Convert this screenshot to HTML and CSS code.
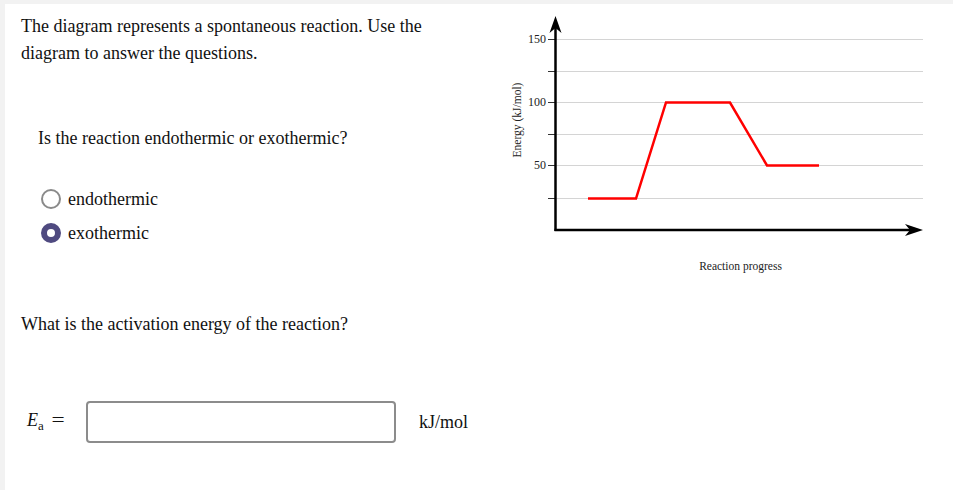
FILE: index.html
```html
<!DOCTYPE html>
<html>
<head>
<meta charset="utf-8">
<link rel="stylesheet" href="styles.css">
</head>
<body>
<div class="panel">
  <div class="left">
    <p class="intro">The diagram represents a spontaneous reaction. Use the diagram to answer the questions.</p>
    <p class="q1">Is the reaction endothermic or exothermic?</p>
    <div class="options">
      <label class="opt"><span class="radio"></span>endothermic</label>
      <label class="opt"><span class="radio checked"></span>exothermic</label>
    </div>
    <p class="q2">What is the activation energy of the reaction?</p>
    <div class="answer">
      <span class="ea"><i>E</i><sub>a</sub><span class="eq">=</span></span>
      <span class="input"></span>
      <span class="unit">kJ/mol</span>
    </div>
  </div>
  <div class="right">
    <svg class="chart" width="460" height="290" viewBox="480 4 460 290" xmlns="http://www.w3.org/2000/svg">
      <g stroke="#d4d4d4" stroke-width="1">
        <line x1="556" y1="39.5" x2="923" y2="39.5"/>
        <line x1="556" y1="71.5" x2="923" y2="71.5"/>
        <line x1="556" y1="102.5" x2="923" y2="102.5"/>
        <line x1="556" y1="134.5" x2="923" y2="134.5"/>
        <line x1="556" y1="165.5" x2="923" y2="165.5"/>
        <line x1="556" y1="198.5" x2="923" y2="198.5"/>
      </g>
      <g stroke="#333" stroke-width="1">
        <line x1="548" y1="39.5" x2="555" y2="39.5"/>
        <line x1="548" y1="71.5" x2="555" y2="71.5"/>
        <line x1="548" y1="102.5" x2="555" y2="102.5"/>
        <line x1="548" y1="134.5" x2="555" y2="134.5"/>
        <line x1="548" y1="165.5" x2="555" y2="165.5"/>
        <line x1="548" y1="198.5" x2="555" y2="198.5"/>
      </g>
      <g class="ticklbl" text-anchor="end">
        <text x="546" y="43">150</text>
        <text x="546" y="106">100</text>
        <text x="546" y="169">50</text>
      </g>
      <polyline points="588,198.5 636,198.5 666,102.5 730,102.5 767,165.5 819,165.5" fill="none" stroke="#ff0000" stroke-width="2.5"/>
      <line x1="555.5" y1="24" x2="555.5" y2="231" stroke="#000" stroke-width="2.5"/>
      <line x1="554.5" y1="230" x2="912" y2="230" stroke="#000" stroke-width="2.5"/>
      <polygon points="555.5,16 549.5,33 555.5,28 561.5,33" fill="#000"/>
      <polygon points="923,230 905,224 910,230 905,236" fill="#000"/>
      <text class="axlbl" x="740.5" y="270" text-anchor="middle">Reaction progress</text>
      <text class="axlbl" x="0" y="0" text-anchor="middle" transform="translate(521 120) rotate(-90)">Energy (kJ/mol)</text>
    </svg>
  </div>
</div>
</body>
</html>
```

FILE: styles.css
```css
html, body {
  margin: 0;
  padding: 0;
  background: #f2f2f2;
  height: 100%;
}
body {
  font-family: "Liberation Serif", "Times New Roman", serif;
  color: #111;
  overflow: hidden;
}
.panel {
  margin: 4px 0 0 5px;
  background: #fff;
  height: 486px;
  display: flex;
}
.left {
  width: 475px;
  padding: 9px 0 0 16px;
  box-sizing: border-box;
  font-size: 18px;
}
.left p {
  margin: 0;
}
.intro {
  line-height: 27px;
  width: 430px;
}
.q1 {
  margin-top: 58px !important;
  margin-left: 17px !important;
  line-height: 27px;
}
.options {
  margin-top: 37px;
  margin-left: 20px;
  display: flex;
  flex-direction: column;
  gap: 14px;
}
.opt {
  display: flex;
  align-items: center;
  gap: 7px;
  height: 20px;
}
.radio {
  width: 20px;
  height: 20px;
  box-sizing: border-box;
  border-radius: 50%;
  border: 2px solid #8a8a8a;
  background: #fff;
  display: inline-block;
}
.radio.checked {
  border: 6px solid #4f4a80;
  background: #fff;
}
.q2 {
  margin-top: 68px !important;
  line-height: 27px;
}
.answer {
  margin-top: 63px;
  margin-left: 6px;
  display: flex;
  align-items: center;
  height: 42px;
}
.ea {
  width: 59px;
  font-size: 18px;
}
.ea sub {
  font-size: 13px;
  vertical-align: -4px;
}
.eq {
  margin-left: 9px;
  display: inline-block;
  transform: scaleX(1.3);
}
.input {
  width: 310px;
  height: 42px;
  box-sizing: border-box;
  border: 2px solid #8c8c8c;
  border-radius: 4px;
  background: #fff;
}
.unit {
  margin-left: 23px;
}
.right {
  flex: 1;
}
.chart {
  display: block;
}
.ticklbl text {
  font-family: "Liberation Serif", serif;
  font-size: 12px;
  fill: #222;
}
.axlbl {
  font-family: "Liberation Serif", serif;
  font-size: 11.5px;
  fill: #222;
}
```
